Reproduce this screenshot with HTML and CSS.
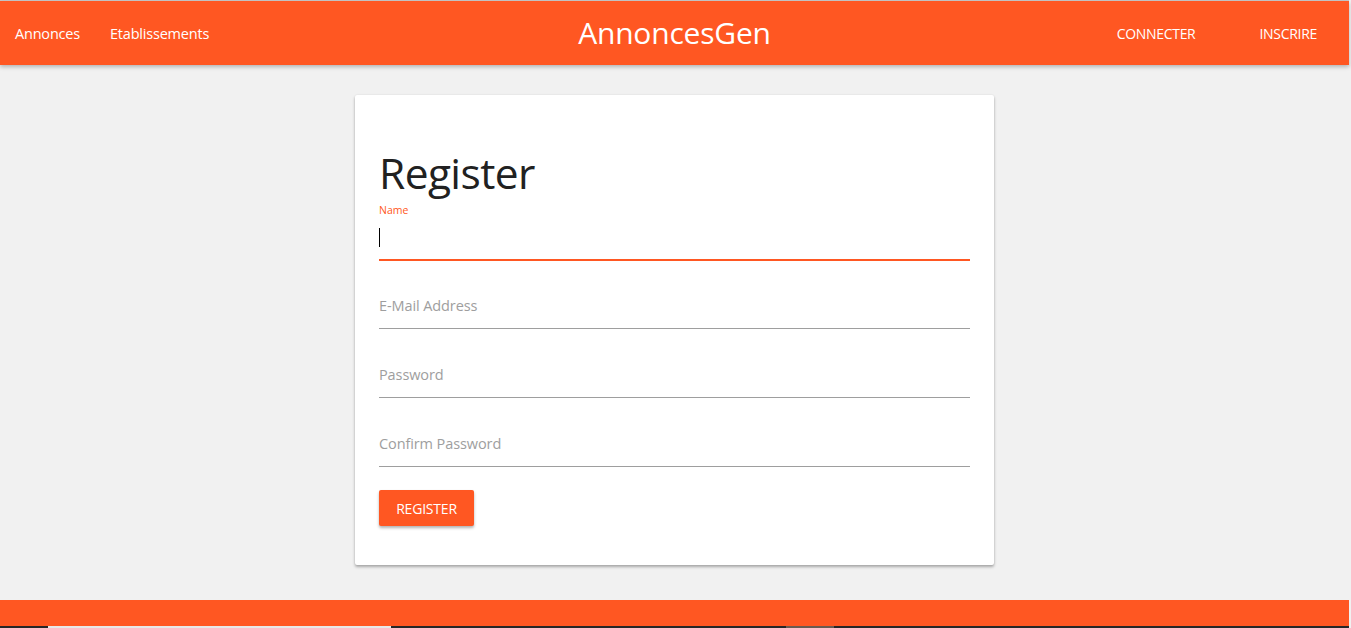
FILE: index.html
```html
<!DOCTYPE html>
<html lang="fr">
<head>
<meta charset="utf-8">
<title>AnnoncesGen - Register</title>
<link rel="stylesheet" href="styles.css">
</head>
<body>
<div class="page">
  <header class="nav">
    <nav class="nav-left">
      <a class="nav-link" href="#">Annonces</a>
      <a class="nav-link" href="#">Etablissements</a>
    </nav>
    <div class="brand">AnnoncesGen</div>
    <nav class="nav-right">
      <a class="nav-btn" href="#">CONNECTER</a>
      <a class="nav-btn" href="#">INSCRIRE</a>
    </nav>
  </header>
  <main class="main">
    <section class="card">
      <h1 class="title">Register</h1>
      <form class="form">
        <div class="field active">
          <label class="field-label">Name</label>
          <div class="field-input"><span class="caret"></span></div>
        </div>
        <div class="field">
          <div class="field-input"><span class="placeholder">E-Mail Address</span></div>
        </div>
        <div class="field">
          <div class="field-input"><span class="placeholder">Password</span></div>
        </div>
        <div class="field">
          <div class="field-input"><span class="placeholder">Confirm Password</span></div>
        </div>
        <button type="button" class="btn">REGISTER</button>
      </form>
    </section>
  </main>
  <footer class="footer"></footer>
  <div class="taskbar">
    <span class="tb-dark tb-a"></span>
    <span class="tb-light"></span>
    <span class="tb-dark tb-b"></span>
    <span class="tb-mid"></span>
    <span class="tb-dark tb-c"></span>
  </div>
</div>
</body>
</html>
```
FILE: styles.css
```css
* { box-sizing: border-box; }
html, body { margin: 0; padding: 0; }
body {
  background: #f1f1f1;
  font-family: "Open Sans", "Noto Sans", sans-serif;
  color: #212121;
  overflow: hidden;
}
.page {
  width: 1349px;
  height: 628px;
  display: flex;
  flex-direction: column;
  border-top: 1px solid #c8c8c8;
}
.nav {
  height: 64px;
  background: #ff5722;
  display: flex;
  align-items: center;
  justify-content: space-between;
  box-shadow: 0 2px 4px rgba(0,0,0,0.25);
  position: relative;
  z-index: 2;
  flex-shrink: 0;
}
.nav-left { display: flex; width: 400px; padding-left: 15px; gap: 30px; }
.nav-right { display: flex; width: 400px; justify-content: flex-end; padding-right: 32px; gap: 64px; }
.nav-link {
  color: #fff;
  text-decoration: none;
  font-size: 14.5px;
  letter-spacing: -0.2px;
}
.nav-btn {
  color: #fff;
  text-decoration: none;
  font-size: 14px;
  letter-spacing: -0.3px;
}
.brand {
  color: #fff;
  font-size: 30px;
  letter-spacing: -0.2px;
  line-height: 1;
}
.main {
  flex: 1;
  padding-top: 30px;
  display: flex;
  justify-content: center;
  align-items: flex-start;
}
.card {
  width: 639px;
  height: 470px;
  background: #fff;
  border-radius: 2px;
  box-shadow: 0 2px 3px rgba(0,0,0,0.3), 0 0 2px rgba(0,0,0,0.08);
  padding: 48px 24px 0 24px;
}
.title {
  margin: 0;
  font-weight: 400;
  font-size: 42.5px;
  letter-spacing: -0.6px;
  line-height: 60px;
  color: #212121;
}
.form { display: flex; flex-direction: column; }
.field { display: flex; flex-direction: column; margin-bottom: 23px; }
.field-label {
  color: #ff5722;
  font-size: 10.5px;
  line-height: 14px;
  height: 14px;
}
.field-input {
  height: 46px;
  border-bottom: 1px solid #9e9e9e;
  display: flex;
  align-items: center;
  font-size: 14.5px;
}
.field.active .field-input {
  height: 44px;
  border-bottom: 2px solid #ff5722;
  align-items: flex-start;
  padding-top: 11px;
}
.field.active { margin-bottom: 22px; }
.caret { display: block; width: 1px; height: 19px; background: #000; }
.placeholder { color: #9e9e9e; letter-spacing: -0.1px; }
.btn {
  align-self: flex-start;
  width: 95px;
  height: 36px;
  background: #ff5722;
  color: #fff;
  border: none;
  border-radius: 2px;
  font-family: inherit;
  font-size: 14px;
  letter-spacing: -0.2px;
  box-shadow: 0 2px 3px rgba(0,0,0,0.3);
  padding: 0;
}
.footer {
  height: 26px;
  background: #ff5722;
  flex-shrink: 0;
}
.taskbar { height: 2px; display: flex; flex-shrink: 0; }
.taskbar span { display: block; height: 2px; }
.tb-dark { background: #262626; }
.tb-a { width: 48px; }
.tb-light { width: 343px; background: #e8e8e8; }
.tb-b { width: 395px; }
.tb-mid { width: 48px; background: #6a5a50; }
.tb-c { flex: 1; }
```
